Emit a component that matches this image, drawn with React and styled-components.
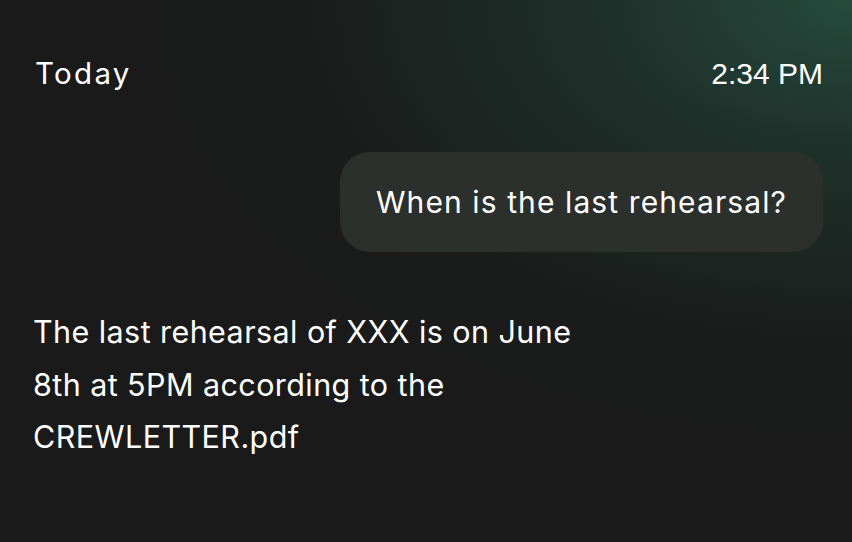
import React from "react";
import styled, { createGlobalStyle } from "styled-components";

const Global = createGlobalStyle`
  html, body { margin: 0; padding: 0; background: #1a1a1a; }
  * { box-sizing: border-box; }
`;

const Screen = styled.div`
  width: 852px;
  height: 542px;
  overflow: hidden;
  background:
    radial-gradient(ellipse 800px 500px at 100% 0%, rgba(38, 74, 61, 1) 0%, rgba(31, 53, 45, 0.85) 30%, rgba(27, 30, 29, 0.35) 70%, rgba(26, 26, 26, 0) 100%),
    #1a1a1a;
  color: #ffffff;
  font-family: Inter, "Open Sans", sans-serif;
  padding: 54px 29px 0 33px;
  display: flex;
  flex-direction: column;
`;

const Header = styled.div`
  display: flex;
  justify-content: space-between;
  align-items: baseline;
  padding-left: 2px;
`;

const DayLabel = styled.span`
  font-family: Inter, "Open Sans", sans-serif;
  font-size: 29.5px;
  letter-spacing: 2.3px;
  line-height: 38px;
`;

const Time = styled.span`
  font-family: "Liberation Sans", Arial, sans-serif;
  font-size: 30px;
  line-height: 38px;
`;

const UserRow = styled.div`
  display: flex;
  justify-content: flex-end;
  margin-top: 59px;
`;

const Bubble = styled.div`
  background: #2c302d;
  border-radius: 30px;
  height: 100px;
  padding: 0 36px;
  display: flex;
  align-items: center;
  font-size: 30px;
  letter-spacing: 1.1px;
  font-weight: 400;
`;

const Answer = styled.p`
  margin: 54px 0 0;
  width: 600px;
  font-size: 30.5px;
  letter-spacing: 0.42px;
  line-height: 52.5px;
`;

export default function App() {
  return (
    <>
      <Global />
      <Screen>
        <Header>
          <DayLabel>Today</DayLabel>
          <Time>2:34 PM</Time>
        </Header>
        <UserRow>
          <Bubble>When is the last rehearsal?</Bubble>
        </UserRow>
        <Answer>
          The last rehearsal of XXX is on June
          <br />
          8th at 5PM according to the
          <br />
          CREWLETTER.pdf
        </Answer>
      </Screen>
    </>
  );
}
